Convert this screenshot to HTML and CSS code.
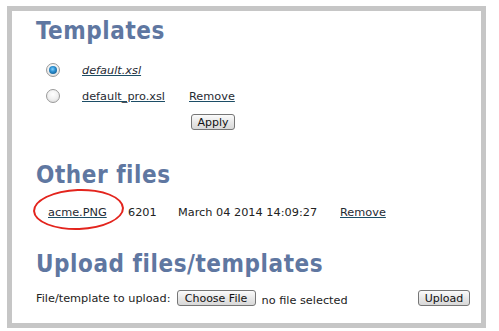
FILE: index.html
```html
<!DOCTYPE html>
<html>
<head>
<meta charset="utf-8">
<link rel="stylesheet" href="styles.css">
</head>
<body>
<div class="frame">
  <h2 class="heading first">Templates</h2>
  <div class="tpl-list">
    <div class="tpl-row">
      <span class="radio checked"></span>
      <a class="link italic" href="#">default.xsl</a>
      <span></span>
    </div>
    <div class="tpl-row">
      <span class="radio"></span>
      <a class="link" href="#">default_pro.xsl</a>
      <a class="link" href="#">Remove</a>
    </div>
  </div>
  <div class="apply-row"><button class="btn btn-apply">Apply</button></div>

  <h2 class="heading other">Other files</h2>
  <div class="file-row">
    <span class="file-cell"><a class="link" href="#">acme.PNG</a><span class="circle"></span></span>
    <span>6201</span>
    <span>March 04 2014 14:09:27</span>
    <a class="link" href="#">Remove</a>
  </div>

  <h2 class="heading upload">Upload files/templates</h2>
  <div class="upload-row">
    <span class="label">File/template to upload:</span>
    <button class="btn btn-choose">Choose File</button>
    <span class="nofile">no file selected</span>
    <button class="btn btn-upload">Upload</button>
  </div>
</div>
</body>
</html>
```
FILE: styles.css
```css
html, body {
  margin: 0;
  padding: 0;
  background: #ffffff;
}
body {
  font-family: "DejaVu Sans", Verdana, sans-serif;
  font-size: 11.3px;
  color: #222222;
}
.frame {
  margin: 6px 0 0 7px;
  width: 445px;
  height: 306px;
  padding: 6px 0 0 24px;
  border: 5px solid #c6c6c6;
  position: relative;
}
.heading {
  margin: 0;
  font-family: "DejaVu Sans Condensed", "DejaVu Sans", sans-serif;
  font-stretch: condensed;
  font-weight: bold;
  font-size: 24px;
  line-height: 28px;
  letter-spacing: 0.55px;
  color: #5f77a1;
}
.tpl-list {
  margin-top: 12px;
  margin-left: 10px;
}
.tpl-row {
  display: grid;
  grid-template-columns: 36px 107px auto;
  align-items: center;
  height: 26px;
}
.radio {
  display: block;
  width: 12px;
  height: 12px;
  border-radius: 50%;
  border: 1px solid #9a9a9a;
  background: radial-gradient(circle at 50% 35%, #ffffff 0%, #efefef 55%, #d2d2d2 100%);
  position: relative;
}
.radio.checked::after {
  content: "";
  position: absolute;
  left: 2px;
  top: 2px;
  width: 8px;
  height: 8px;
  border-radius: 50%;
  background: radial-gradient(circle at 45% 40%, #7fd0ff 0%, #2c8fd0 40%, #0b4a78 100%);
}
.link {
  color: #1f2a33;
  text-decoration: underline;
  text-decoration-color: #1c4d66;
  text-underline-offset: 1px;
}
.italic {
  font-style: italic;
}
.apply-row {
  margin-top: 5px;
  padding-left: 155px;
  height: 16px;
}
.btn {
  display: inline-block;
  box-sizing: border-box;
  height: 16px;
  padding: 0;
  margin: 0;
  border: 1px solid #767676;
  border-radius: 3px;
  background: linear-gradient(#fbfbfb, #e8e8e8 50%, #d8d8d8);
  font-family: "DejaVu Sans", Verdana, sans-serif;
  font-size: 11px;
  line-height: 13px;
  color: #111111;
  text-align: center;
  vertical-align: top;
}
.btn-apply { width: 44px; }
.btn-choose { width: 79px; }
.btn-upload { width: 52px; }
.other {
  margin-top: 31px;
}
.file-row {
  margin-top: 17px;
  margin-left: 12px;
  display: grid;
  grid-template-columns: 80px 50px 162px auto;
  line-height: 14px;
  height: 14px;
}
.file-cell {
  position: relative;
}
.circle {
  position: absolute;
  left: -15px;
  top: -17px;
  width: 87px;
  height: 37px;
  border: 2px solid #e3241d;
  border-radius: 50%;
  transform: rotate(-2deg);
}
.upload {
  margin-top: 30px;
}
.upload-row {
  margin-top: 12px;
  display: flex;
  align-items: flex-start;
  padding-right: 11px;
}
.label {
  margin-top: 2px;
  line-height: 13px;
}
.btn-choose {
  margin-left: 6px;
}
.nofile {
  margin-left: 6px;
  margin-top: 4px;
  line-height: 13px;
}
.btn-upload {
  margin-left: auto;
}
```
